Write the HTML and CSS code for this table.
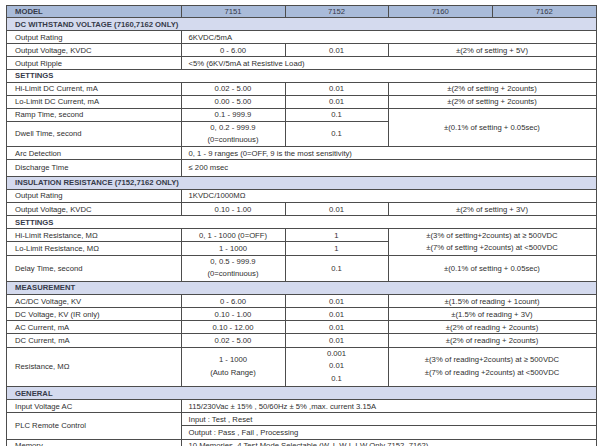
FILE: index.html
```html
<!DOCTYPE html>
<html>
<head>
<meta charset="utf-8">
<title>Spec table</title>
<link rel="stylesheet" href="styles.css">
</head>
<body>
<table class="spec">
  <colgroup>
    <col class="c-lbl"><col class="c-1"><col class="c-2"><col class="c-3"><col class="c-4">
  </colgroup>
  <tr class="model a">
    <th class="lbl">MODEL</th><th>7151</th><th>7152</th><th>7160</th><th>7162</th>
  </tr>
  <tr class="sec a"><td colspan="5">DC WITHSTAND VOLTAGE (7160,7162 ONLY)</td></tr>
  <tr class="a"><td class="lbl">Output Rating</td><td class="w" colspan="4">6KVDC/5mA</td></tr>
  <tr class="a"><td class="lbl">Output Voltage, KVDC</td><td class="c">0 - 6.00</td><td class="c">0.01</td><td class="c" colspan="2">±(2% of setting + 5V)</td></tr>
  <tr class="a"><td class="lbl">Output Ripple</td><td class="w" colspan="4">&lt;5% (6KV/5mA at Resistive Load)</td></tr>
  <tr class="sub a"><td colspan="5">SETTINGS</td></tr>
  <tr class="a"><td class="lbl">Hi-Limit DC Current, mA</td><td class="c">0.02 - 5.00</td><td class="c">0.01</td><td class="c" colspan="2">±(2% of setting + 2counts)</td></tr>
  <tr class="a"><td class="lbl">Lo-Limit DC Current, mA</td><td class="c">0.00 - 5.00</td><td class="c">0.01</td><td class="c" colspan="2">±(2% of setting + 2counts)</td></tr>
  <tr class="a"><td class="lbl">Ramp Time, second</td><td class="c">0.1 - 999.9</td><td class="c">0.1</td><td class="c" colspan="2" rowspan="2">±(0.1% of setting + 0.05sec)</td></tr>
  <tr class="a2"><td class="lbl">Dwell Time, second</td><td class="c ml2">0, 0.2 - 999.9<br>(0=continuous)</td><td class="c">0.1</td></tr>
  <tr class="a"><td class="lbl">Arc Detection</td><td class="w" colspan="4">0, 1 - 9 ranges (0=OFF, 9 is the most sensitivity)</td></tr>
  <tr class="dis"><td class="lbl">Discharge Time</td><td class="w" colspan="4">≤ 200 msec</td></tr>
  <tr class="sec b"><td colspan="5">INSULATION RESISTANCE (7152,7162 ONLY)</td></tr>
  <tr class="b"><td class="lbl">Output Rating</td><td class="w" colspan="4">1KVDC/1000MΩ</td></tr>
  <tr class="b"><td class="lbl">Output Voltage, KVDC</td><td class="c">0.10 - 1.00</td><td class="c">0.01</td><td class="c" colspan="2">±(2% of setting + 3V)</td></tr>
  <tr class="sub b"><td colspan="5">SETTINGS</td></tr>
  <tr class="b"><td class="lbl">Hi-Limit Resistance, MΩ</td><td class="c">0, 1 - 1000 (0=OFF)</td><td class="c">1</td><td class="c ml2" colspan="2" rowspan="2">±(3% of setting+2counts) at ≥ 500VDC<br>±(7% of setting +2counts) at &lt;500VDC</td></tr>
  <tr class="b"><td class="lbl">Lo-Limit Resistance, MΩ</td><td class="c">1 - 1000</td><td class="c">1</td></tr>
  <tr class="b2"><td class="lbl">Delay Time, second</td><td class="c ml2">0, 0.5 - 999.9<br>(0=continuous)</td><td class="c">0.1</td><td class="c" colspan="2">±(0.1% of setting + 0.05sec)</td></tr>
  <tr class="sec b"><td colspan="5">MEASUREMENT</td></tr>
  <tr class="b"><td class="lbl">AC/DC Voltage, KV</td><td class="c">0 - 6.00</td><td class="c">0.01</td><td class="c" colspan="2">±(1.5% of reading + 1count)</td></tr>
  <tr class="b"><td class="lbl">DC Voltage, KV (IR only)</td><td class="c">0.10 - 1.00</td><td class="c">0.01</td><td class="c" colspan="2">±(1.5% of reading + 3V)</td></tr>
  <tr class="b"><td class="lbl">AC Current, mA</td><td class="c">0.10 - 12.00</td><td class="c">0.01</td><td class="c" colspan="2">±(2% of reading + 2counts)</td></tr>
  <tr class="b"><td class="lbl">DC Current, mA</td><td class="c">0.02 - 5.00</td><td class="c">0.01</td><td class="c" colspan="2">±(2% of reading + 2counts)</td></tr>
  <tr class="b3"><td class="lbl">Resistance, MΩ</td><td class="c ml3">1 - 1000<br>(Auto Range)</td><td class="c ml3">0.001<br>0.01<br>0.1</td><td class="c ml3" colspan="2">±(3% of reading+2counts) at ≥ 500VDC<br>±(7% of reading +2counts) at &lt;500VDC</td></tr>
  <tr class="sec b"><td colspan="5">GENERAL</td></tr>
  <tr class="b"><td class="lbl">Input Voltage AC</td><td class="w" colspan="4">115/230Vac ± 15% , 50/60Hz ± 5% ,max. current 3.15A</td></tr>
  <tr class="b"><td class="lbl" rowspan="2">PLC Remote Control</td><td class="w" colspan="4">Input : Test , Reset</td></tr>
  <tr class="b"><td class="w" colspan="4">Output : Pass , Fail , Processing</td></tr>
  <tr class="b"><td class="lbl">Memory</td><td class="w" colspan="4">10 Memories, 4 Test Mode Selectable (W, I, W-I, I-W Only 7152, 7162)</td></tr>
</table>
</body>
</html>
```

FILE: styles.css
```css
html, body {
  margin: 0;
  background: #ffffff;
}

body {
  padding: 4.5px 6px 0 6px;
  font-family: "Liberation Sans", Arial, sans-serif;
}

.spec {
  border-collapse: collapse;
  table-layout: fixed;
  width: 590px;
  font-size: 7.7px;
  color: #2f2f2f;
  border: 1.5px solid #333333;
}

.c-lbl { width: 174.5px; }
.c-1 { width: 104px; }
.c-2 { width: 103px; }
.c-3 { width: 104.5px; }
.c-4 { width: 103.5px; }

.spec td,
.spec th {
  border: 1px solid #4d4d4d;
  padding: 0 0 0 7px;
  line-height: 9px;
  vertical-align: middle;
  white-space: nowrap;
  overflow: hidden;
  font-weight: normal;
  text-align: left;
}

.spec .lbl { padding-left: 8px; }
.spec .c { text-align: center; padding: 0; }
.spec .w { padding-left: 7px; }
.spec .ml2 { line-height: 12.4px; }
.spec .ml3 { line-height: 12.7px; }

.model th {
  background: #a9bbd9;
  text-align: center;
  padding: 0;
  color: #363a4a;
}
.model th.lbl {
  text-align: left;
  padding-left: 8px;
  font-weight: bold;
}

.sec td {
  background: #d4daee;
  font-weight: bold;
  padding-left: 8px;
  color: #363a4a;
}

.sub td {
  font-weight: bold;
  padding-left: 8px;
  color: #363a4a;
}

tr.a { height: 12.9px; }
tr.a2 { height: 25.8px; }
tr.dis { height: 16.5px; }
tr.b { height: 13.15px; }
tr.b2 { height: 26.3px; }
tr.b3 { height: 39.45px; }
```
